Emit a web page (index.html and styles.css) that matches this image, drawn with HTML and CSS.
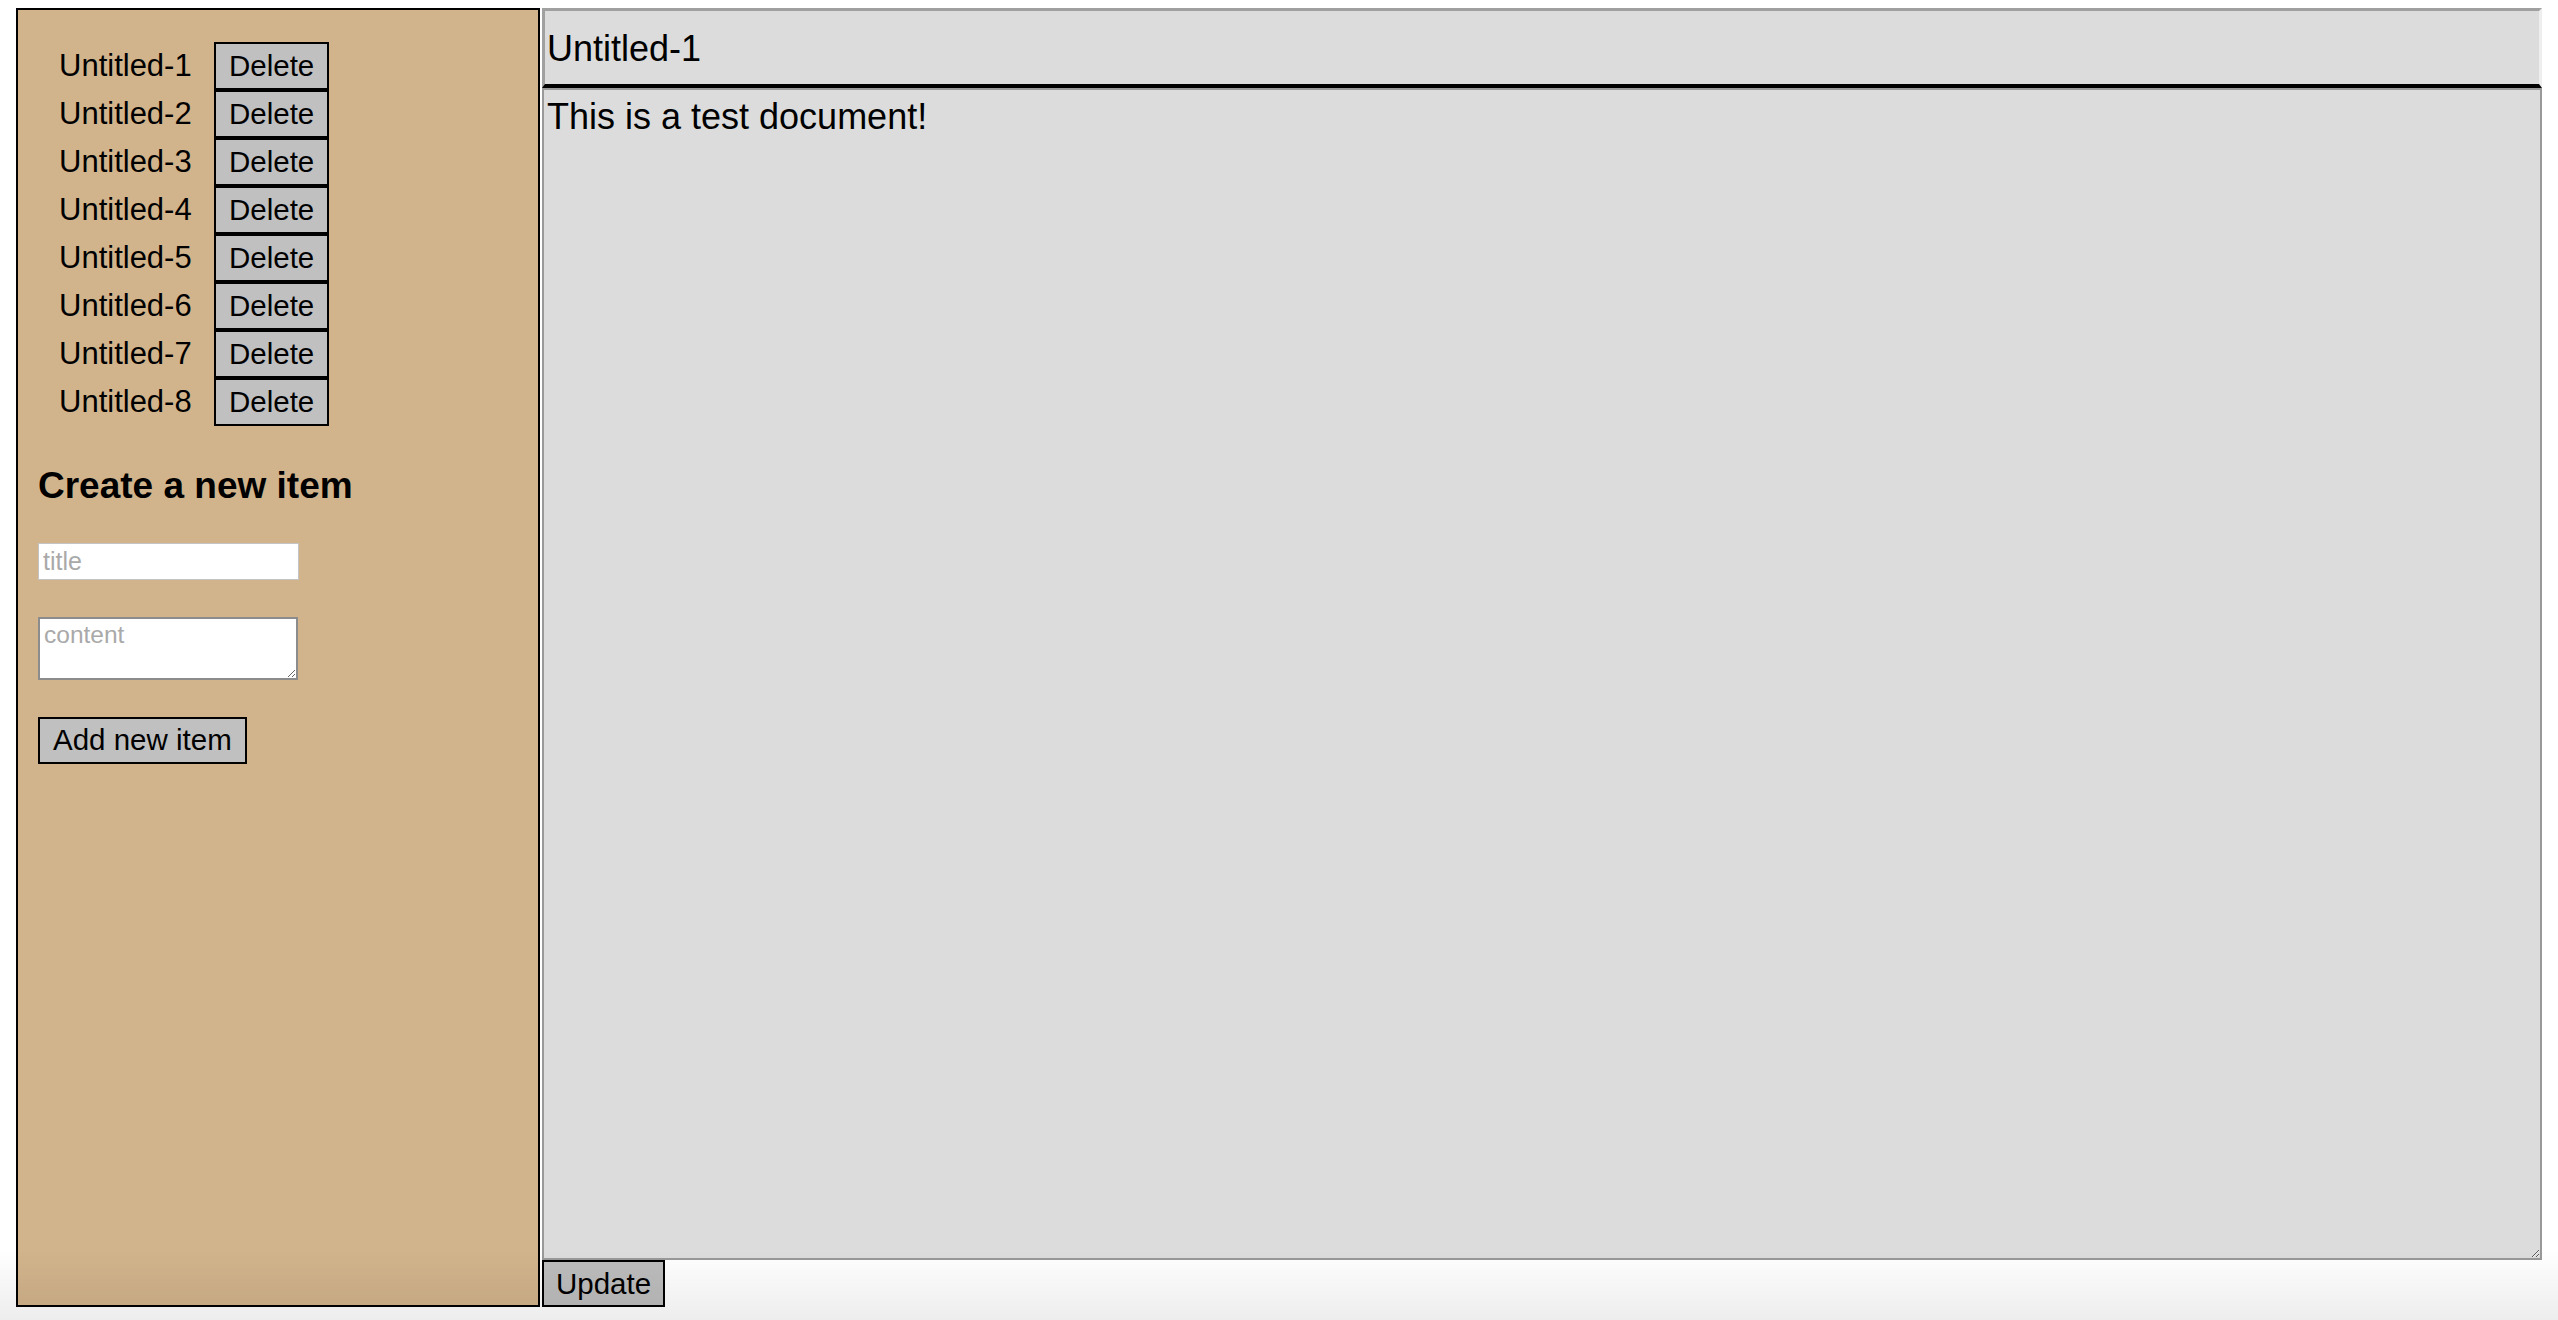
FILE: index.html
```html
<!DOCTYPE html>
<html lang="en">
<head>
<meta charset="utf-8">
<title>Documents</title>
<link rel="stylesheet" href="styles.css">
</head>
<body>
<div class="app">
  <aside class="sidebar">
    <ul class="doc-list">
      <li class="doc-row"><span class="doc-name">Untitled-1</span><button class="btn">Delete</button></li>
      <li class="doc-row"><span class="doc-name">Untitled-2</span><button class="btn">Delete</button></li>
      <li class="doc-row"><span class="doc-name">Untitled-3</span><button class="btn">Delete</button></li>
      <li class="doc-row"><span class="doc-name">Untitled-4</span><button class="btn">Delete</button></li>
      <li class="doc-row"><span class="doc-name">Untitled-5</span><button class="btn">Delete</button></li>
      <li class="doc-row"><span class="doc-name">Untitled-6</span><button class="btn">Delete</button></li>
      <li class="doc-row"><span class="doc-name">Untitled-7</span><button class="btn">Delete</button></li>
      <li class="doc-row"><span class="doc-name">Untitled-8</span><button class="btn">Delete</button></li>
    </ul>
    <h3 class="new-heading">Create a new item</h3>
    <form class="new-form">
      <input class="new-title" type="text" placeholder="title">
      <textarea class="new-content" placeholder="content"></textarea>
      <button class="btn btn-add" type="button">Add new item</button>
    </form>
  </aside>
  <main class="editor">
    <input class="doc-title" type="text" value="Untitled-1">
    <textarea class="doc-body">This is a test document!</textarea>
    <div class="editor-actions"><button class="btn btn-update" type="button">Update</button></div>
  </main>
</div>
<div class="vignette"></div>
</body>
</html>
```

FILE: styles.css
```css
html, body {
  margin: 0;
  height: 1320px;
  overflow: hidden;
}

body {
  padding: 8px 16px 0 16px;
  box-sizing: border-box;
  background: #ffffff;
  font-family: "Liberation Sans", Arial, Helvetica, sans-serif;
  color: #000;
}

.app {
  display: flex;
  gap: 2px;
  height: 1299px;
}

.sidebar {
  width: 524px;
  flex: none;
  box-sizing: border-box;
  border: 2px solid #000;
  background: #d2b48c;
  padding: 32px 20px 0 20px;
}

.doc-list {
  list-style: none;
  margin: 0;
  padding: 0 0 0 21px;
}

.doc-row {
  display: flex;
  align-items: center;
  height: 48px;
}

.doc-name {
  width: 155px;
  font-size: 31px;
  white-space: nowrap;
}

.btn {
  box-sizing: border-box;
  height: 48px;
  margin: 0;
  padding: 0 13px;
  border: 2px solid #000;
  border-radius: 0;
  background: #c0c0c0;
  color: #000;
  font-family: "Liberation Sans", Arial, Helvetica, sans-serif;
  font-size: 29.5px;
  line-height: 1;
}

.new-heading {
  margin: 39px 0 0 0;
  font-size: 37px;
  line-height: 1.15;
  font-weight: bold;
}

.new-form {
  display: flex;
  flex-direction: column;
  align-items: flex-start;
  gap: 37px;
  margin-top: 35px;
}

.new-title {
  box-sizing: border-box;
  width: 261px;
  height: 37px;
  margin: 0;
  padding: 0 4px;
  border: 1px solid #c4c4c4;
  background: #fff;
  font-family: "Liberation Sans", Arial, Helvetica, sans-serif;
  font-size: 25px;
}

.new-content {
  box-sizing: border-box;
  width: 260px;
  height: 63px;
  margin: 0;
  padding: 2px 4px;
  border: 2px solid #8c8c8c;
  background: #fff;
  font-family: "Liberation Sans", Arial, Helvetica, sans-serif;
  font-size: 24.5px;
}

.new-title::placeholder,
.new-content::placeholder {
  color: #a9a9a9;
}

.btn-add {
  height: 47px;
}

.editor {
  width: 2000px;
  flex: none;
  display: flex;
  flex-direction: column;
}

.doc-title {
  box-sizing: border-box;
  width: 100%;
  height: 80px;
  margin: 0;
  padding: 3px 2px 0 2px;
  border-style: solid;
  border-width: 3px 3px 4px 3px;
  border-color: #a0a0a0 #eeeeee #000000 #a0a0a0;
  background: #dcdcdc;
  font-family: "Liberation Sans", Arial, Helvetica, sans-serif;
  font-size: 36px;
  color: #000;
  outline: none;
}

.doc-body {
  box-sizing: border-box;
  flex: 1;
  width: 100%;
  margin: 0;
  padding: 6px 3px 3px 3px;
  border: 2px solid #999999;
  background: #dcdcdc;
  font-family: "Liberation Sans", Arial, Helvetica, sans-serif;
  font-size: 36px;
  color: #000;
  outline: none;
  resize: both;
}

.editor-actions {
  display: flex;
}

.btn-update {
  height: 47px;
  padding: 0 12px;
  background: #bdbdbd;
}

.vignette {
  position: fixed;
  left: 0;
  right: 0;
  bottom: 0;
  height: 70px;
  pointer-events: none;
  background: linear-gradient(to bottom, rgba(0, 0, 0, 0), rgba(0, 0, 0, 0.07));
}
```
